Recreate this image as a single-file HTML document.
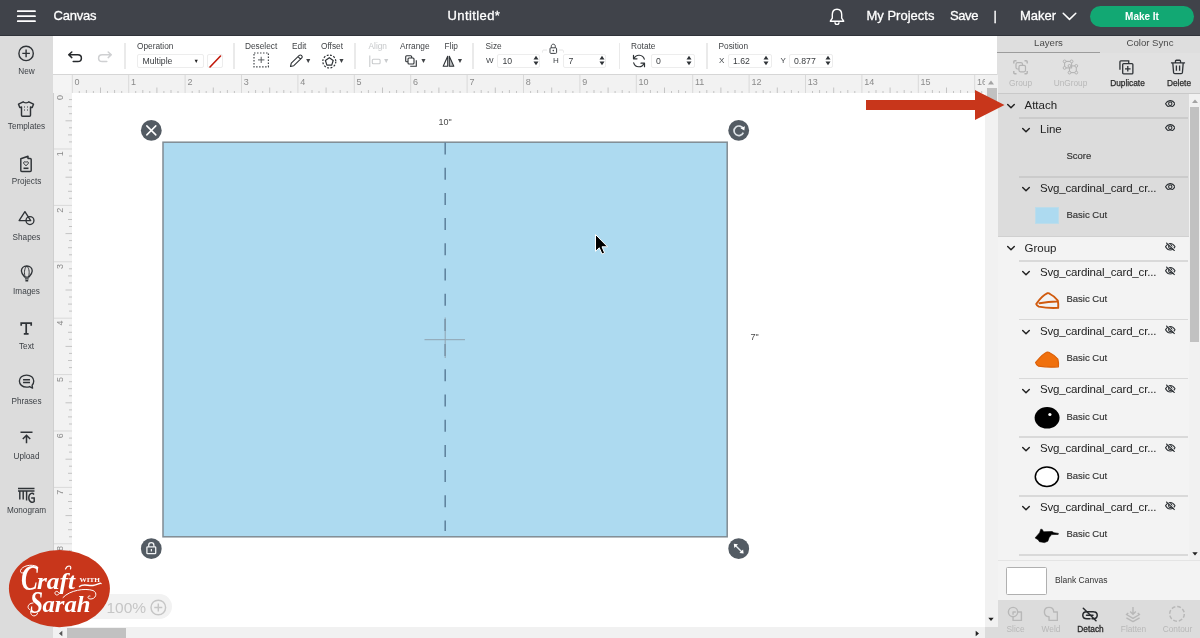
<!DOCTYPE html>
<html><head><meta charset="utf-8"><title>Canvas</title>
<style>
*{box-sizing:border-box;margin:0;padding:0}
html,body{width:1200px;height:638px;overflow:hidden;background:#fff;font-family:"Liberation Sans",sans-serif;color:#333}
.abs{position:absolute}
body>.abs{will-change:transform}
#hdr{will-change:transform;position:absolute;left:0;top:0;width:1200px;height:35.500px;background:#40434a;color:#fff;border-bottom:1.500px solid #30333a;z-index:5}
#hdr .t{position:absolute;top:7.5px;font-size:13px;line-height:16px;white-space:nowrap;color:#fff;-webkit-text-stroke:0.3px #fff}
#side{will-change:transform;position:absolute;left:0;top:35px;width:53px;height:603px;background:#dcdcdc}
#side .lb{position:absolute;left:0;width:53px;text-align:center;font-size:8.2px;color:#3b3f44;line-height:10px}
#side svg{position:absolute}
#tb{will-change:transform;position:absolute;left:53px;top:35px;width:944px;height:39px;background:#fff}
#tb .l{position:absolute;top:6px;font-size:8.3px;line-height:10px;color:#404346;white-space:nowrap}
#tb .sep{position:absolute;top:8px;width:1.500px;height:25.500px;background:#eaeaea}
#tb .inp{position:absolute;top:18.5px;height:14px;border:1px solid #ededed;border-radius:2px;font-size:8.7px;line-height:12px;padding-left:4.5px;color:#3a3d40;background:#fff}
#tb .sm{position:absolute;top:20.5px;font-size:8px;line-height:10px;color:#3f4347}
#tb svg{position:absolute}
#hr{will-change:transform;position:absolute;left:53px;top:74px;width:944px;height:19px;background:#f2f2f2;border-top:1.5px solid #d6d6d6}
#vr{will-change:transform;position:absolute;left:53px;top:93px;width:19px;height:534px;background:#f2f2f2;border-left:1.500px solid #cfcfcf}
#cv{will-change:transform;position:absolute;left:72px;top:93px;width:913px;height:534px;background:#fff;overflow:hidden}
#rp{will-change:transform;position:absolute;left:997px;top:35px;width:203px;height:603px;background:#f3f3f3}

#rp .tab{position:absolute;top:0;height:18px;font-size:9.6px;line-height:15.5px;color:#4a4a4a;text-align:center;background:#dedede}
#rp .al{position:absolute;font-size:8.3px;line-height:10px;white-space:nowrap;transform:translateX(-50%)}
#rp svg{position:absolute}
#rp .row{position:absolute;font-size:11.5px;line-height:14px;color:#222;white-space:nowrap}
#rp .svgn{letter-spacing:-0.17px}
#rp .sub{position:absolute;left:69.500px;font-size:9.500px;line-height:12px;color:#333;white-space:nowrap;-webkit-text-stroke:0.150px #333}
#rp .hl{position:absolute;height:1.5px;background:#cbcbcb}
#rp .hl2{position:absolute;height:1.5px;background:#d9d9d9}
</style></head><body>
<div id="hdr">
 <svg class="abs" style="left:16px;top:9px" width="21" height="14" viewBox="0 0 21 14"><path d="M1.800 2.200H19M1.800 7.200H19M1.800 12.200H19" stroke="#fff" stroke-width="1.800" stroke-linecap="round"/></svg>
 <span class="t" style="left:53.5px;letter-spacing:-0.2px">Canvas</span>
 <span class="t" style="left:447.5px;letter-spacing:0.4px">Untitled*</span>
 <span class="t" style="left:866.5px">My Projects</span>
 <span class="t" style="left:950px;letter-spacing:-0.4px">Save</span>
 <span class="t" style="left:993.5px">|</span>
 <span class="t" style="left:1020px">Maker</span>

 <svg class="abs" style="left:828px;top:7px" width="18" height="20" viewBox="0 0 18 20"><path d="M9 2.2C5.8 2.2 4.3 4.6 4.3 7.6V11.2L2.3 14.2H15.7L13.7 11.2V7.6C13.7 4.6 12.2 2.2 9 2.2Z" fill="none" stroke="#fff" stroke-width="1.4" stroke-linejoin="round"/><path d="M7 15.2C7 16.6 7.9 17.4 9 17.4S11 16.6 11 15.2" fill="none" stroke="#fff" stroke-width="1.4"/></svg>
 <svg class="abs" style="left:1062px;top:12px" width="15" height="9" viewBox="0 0 15 9"><path d="M1.2 1.2L7.5 7.4L13.8 1.2" fill="none" stroke="#fff" stroke-width="1.5" stroke-linecap="round" stroke-linejoin="round"/></svg>
 <div class="abs" style="left:1090px;top:6px;width:104px;height:21px;border-radius:11px;background:#12a873;color:#fff;font-size:10px;font-weight:bold;text-align:center;line-height:21px">Make It</div>
</div>
<div id="side">
 <svg style="left:16px;top:9px" width="20" height="20" viewBox="0 0 20 20"><circle cx="10.100" cy="9.400" r="7.200" fill="none" stroke="#2f3337" stroke-width="1.400"/><path d="M6.300 9.400H13.900M10.100 5.600V13.200" stroke="#2f3337" stroke-width="1.400"/></svg>
 <span class="lb" style="top:32px">New</span>
 <svg style="left:17px;top:65px" width="18" height="18" viewBox="0 0 18 18"><path d="M6.200 1.800C6.800 3.200 11.200 3.200 11.800 1.800L16.500 4.200L15.200 7.600L13.500 7V15.200C13.500 15.800 13.100 16.200 12.500 16.200H5.500C4.900 16.200 4.500 15.800 4.500 15.200V7L2.800 7.600L1.500 4.200Z" fill="none" stroke="#2f3337" stroke-width="1.450" stroke-linejoin="round"/><path d="M7.500 6.500V7.500M10.500 6.500V7.500M7.500 9.500V10.500M10.500 9.500V10.500" stroke="#2f3337" stroke-width="1"/></svg>
 <span class="lb" style="top:87px">Templates</span>
 <svg style="left:19px;top:120px" width="14" height="18" viewBox="0 0 14 18"><path d="M1.800 3.800L9 1.300V3.500H11.200C11.800 3.500 12.200 3.900 12.200 4.500V15.500C12.200 16.100 11.800 16.500 11.200 16.500H2.800C2.200 16.500 1.800 16.100 1.800 15.500Z" fill="none" stroke="#2f3337" stroke-width="1.450" stroke-linejoin="round"/><path d="M7 10.600C5.400 9.500 4.600 8.700 4.600 7.800C4.600 6.600 6.200 6.300 7 7.400C7.800 6.300 9.400 6.600 9.400 7.800C9.400 8.700 8.600 9.500 7 10.600Z" fill="none" stroke="#2f3337" stroke-width="1"/><path d="M4.500 13.300H9.500" stroke="#2f3337" stroke-width="1.600"/></svg>
 <span class="lb" style="top:142px">Projects</span>
 <svg style="left:17.800px;top:175.300px" width="17.500" height="16.600" viewBox="0 0 19 18"><path d="M7.500 1.800L13.800 11.500H1.200Z" fill="none" stroke="#2f3337" stroke-width="1.450" stroke-linejoin="round"/><circle cx="13" cy="11.500" r="4.300" fill="none" stroke="#2f3337" stroke-width="1.450"/></svg>
 <span class="lb" style="top:197.700px">Shapes</span>
 <svg style="left:19.500px;top:229.500px" width="14" height="17.800" viewBox="0 0 15 19"><path d="M7.300 1C3.800 1 1.500 3.500 1.500 6.500C1.500 9.300 3.800 11.300 5.300 13H9.300C10.800 11.300 13.100 9.300 13.100 6.500C13.100 3.500 10.800 1 7.300 1Z" fill="none" stroke="#2f3337" stroke-width="1.450"/><path d="M5.600 13C4.300 9 4.300 4 7.300 1C10.300 4 10.300 9 9 13" fill="none" stroke="#2f3337" stroke-width="1"/><path d="M5.300 14.800H9.300M5.800 16.800H8.800" stroke="#2f3337" stroke-width="1.450"/></svg>
 <span class="lb" style="top:251.500px">Images</span>
 <svg style="left:20px;top:286.800px" width="13" height="14" viewBox="0 0 13 14"><path d="M1.200 3.800V1.200H11.200V3.800M6.200 1.200V11.800M3.800 11.800H8.600" fill="none" stroke="#2f3337" stroke-width="1.700"/></svg>
 <span class="lb" style="top:307px">Text</span>
 <svg style="left:17.500px;top:339.200px" width="17.500" height="15.700" viewBox="0 0 19 17"><path d="M9.300 1.200C4.700 1.200 1.500 4 1.500 7.700C1.500 11.400 4.700 14.200 9.300 14.200C10.500 14.200 11.600 14 12.600 13.600L15.800 15.300L15.300 12.200C16.500 11 17.100 9.400 17.100 7.700C17.100 4 13.900 1.200 9.300 1.200Z" fill="none" stroke="#2f3337" stroke-width="1.450" stroke-linejoin="round"/><path d="M5.500 6.200H13M5.500 9.200H13" stroke="#2f3337" stroke-width="1.450"/></svg>
 <span class="lb" style="top:361.600px">Phrases</span>
 <svg style="left:20px;top:395.500px" width="13" height="14" viewBox="0 0 13 14"><path d="M0.500 1.300H12.500M6.500 12.300V4.500M2.800 8L6.500 4.300L10.200 8" fill="none" stroke="#2f3337" stroke-width="1.500"/></svg>
 <span class="lb" style="top:416.800px">Upload</span>
 <svg style="left:17px;top:452px" width="19" height="18" viewBox="0 0 19 18"><path d="M1 1.500H17.500M1 4H17.500M2.800 4V12.500M6.200 4V12.500M9.600 4V13.500" fill="none" stroke="#2f3337" stroke-width="1.450"/><path d="M17 7.500C15.500 5.500 11.800 6 11.800 10.800C11.800 15.500 15.800 16 17.200 14.500V11H14.200" fill="none" stroke="#2f3337" stroke-width="1.450"/></svg>
 <span class="lb" style="top:470.500px">Monogram</span>
</div>
<div id="tb">
 <svg style="left:14px;top:15px" width="16" height="13" viewBox="0 0 16 13"><path d="M4.800 2L1.700 4.800L4.800 7.600M2 4.800H10.800C13 4.800 14.400 6.200 14.400 8.200S13 11.500 10.800 11.500H6.200" fill="none" stroke="#26292c" stroke-width="1.500" stroke-linecap="round" stroke-linejoin="round"/></svg>
 <svg style="left:44px;top:15px" width="16" height="13" viewBox="0 0 16 13"><path d="M11.200 2L14.300 4.800L11.200 7.600M14 4.800H5.200C3 4.800 1.600 6.200 1.600 8.200S3 11.500 5.200 11.500H9.800" fill="none" stroke="#cfd0d2" stroke-width="1.500" stroke-linecap="round" stroke-linejoin="round"/></svg>
 <div class="sep" style="left:71px"></div>
 <span class="l" style="left:84px">Operation</span>
 <div class="inp" style="left:84px;width:67px">Multiple<span style="position:absolute;right:4px;top:0;font-size:5.5px;color:#222">&#9660;</span></div>
 <div class="inp" style="left:154px;width:16px;padding:0"><svg style="left:0;top:0" width="14" height="13" viewBox="0 0 14 13"><path d="M2 12L12.500 1" stroke="#c2190b" stroke-width="1.6" stroke-linecap="round"/></svg></div>
 <div class="sep" style="left:180px"></div>
 <span class="l" style="left:192px">Deselect</span>
 <svg style="left:200.300px;top:17.200px" width="17" height="17" viewBox="0 0 17 17"><rect x="1" y="1" width="14.400" height="13.800" fill="none" stroke="#44484c" stroke-width="1.200" stroke-dasharray="1.500 1.500"/><path d="M8.200 4.800V11M5 7.900H11.400" stroke="#5a5e62" stroke-width="1"/></svg>
 <span class="l" style="left:239px">Edit</span>
 <svg style="left:236px;top:19px" width="15" height="14" viewBox="0 0 15 14"><path d="M1.500 12.500L2.300 9.200L10.300 1.400C10.900 0.800 11.800 0.800 12.400 1.400L12.800 1.800C13.400 2.400 13.400 3.300 12.800 3.900L4.800 11.700Z M9 2.700L11.500 5.200" fill="none" stroke="#2f3337" stroke-width="1.1" stroke-linejoin="round"/></svg>
 <span class="l" style="left:251.800px;top:21px;font-size:7px">&#9660;</span>
 <span class="l" style="left:268px">Offset</span>
 <svg style="left:268px;top:18px" width="17" height="17" viewBox="0 0 17 17"><circle cx="8.300" cy="8.500" r="6.500" fill="none" stroke="#2f3337" stroke-width="1.200" stroke-dasharray="1.900 1.500"/><path d="M8.3 4.7L12.2 7.5L10.7 12.1L5.9 12.1L4.4 7.5Z" fill="none" stroke="#2f3337" stroke-width="1.200" stroke-linejoin="round"/></svg>
 <span class="l" style="left:285px;top:21px;font-size:7px">&#9660;</span>
 <div class="sep" style="left:301px"></div>
 <span class="l" style="left:315.500px;color:#c6c8ca">Align</span>
 <svg style="left:316px;top:19.500px" width="14" height="13" viewBox="0 0 14 13"><path d="M0.800 0.500V12" stroke="#c9cbcd" stroke-width="1.100"/><rect x="3.300" y="4.200" width="7.800" height="4.600" rx="1" fill="none" stroke="#c9cbcd" stroke-width="1.100"/></svg>
 <span class="l" style="left:329.800px;top:21px;font-size:7px;color:#c9cbcd">&#9660;</span>
 <span class="l" style="left:347px">Arrange</span>
 <svg style="left:352px;top:20px" width="13" height="13" viewBox="0 0 13 13"><rect x="0.700" y="0.700" width="6" height="6" rx="1" fill="#fff" stroke="#2f3337" stroke-width="1.100"/><rect x="3" y="3" width="6" height="6" rx="1" fill="#fff" stroke="#2f3337" stroke-width="1.100"/><path d="M11.300 5.200V11.300H5.200" fill="none" stroke="#2f3337" stroke-width="1.100"/></svg>
 <span class="l" style="left:367px;top:21px;font-size:7px">&#9660;</span>
 <span class="l" style="left:391.500px">Flip</span>
 <svg style="left:389px;top:20px" width="14" height="13" viewBox="0 0 14 13"><path d="M5.700 1.200V11.300H1.200L5.700 1.200Z" fill="none" stroke="#2f3337" stroke-width="1.100" stroke-linejoin="round"/><path d="M7.300 1.200V11.300H11.800L7.300 1.200Z" fill="#b9bbbd" stroke="#2f3337" stroke-width="1.100" stroke-linejoin="round"/></svg>
 <span class="l" style="left:403.500px;top:21px;font-size:7px">&#9660;</span>
 <div class="sep" style="left:419px"></div>
 <span class="l" style="left:432.500px">Size</span>
 <span class="sm" style="left:433px">W</span>
 <div class="inp" style="left:444px;width:43px">10</div>
 <span class="sm" style="left:500px">H</span>
 <div class="inp" style="left:510px;width:43px">7</div>
 <svg style="left:488px;top:8px" width="24" height="12" viewBox="0 0 24 12"><path d="M1.500 9.500V8.500C1.500 7.500 2 7 3 7H6M22.500 9.500V8.500C22.500 7.500 22 7 21 7H18" fill="none" stroke="#e4e4e4" stroke-width="1"/><rect x="9" y="4.800" width="6.600" height="5.600" rx="1" fill="#fff" stroke="#3f4347" stroke-width="1"/><path d="M10.300 4.800V3.300C10.300 1.900 11.200 1.200 12.300 1.200S14.300 1.900 14.300 3.300V4.800" fill="none" stroke="#3f4347" stroke-width="1"/><circle cx="12.300" cy="7.600" r="0.800" fill="#3f4347"/></svg>
 <div class="sep" style="left:565.500px"></div>
 <span class="l" style="left:578px">Rotate</span>
 <svg style="left:579px;top:19px" width="14" height="14" viewBox="0 0 14 14"><path d="M12.300 5.200A5.500 5.500 0 0 0 2 4.500M1.700 8.800A5.500 5.500 0 0 0 12 9.500" fill="none" stroke="#2f3337" stroke-width="1.200" stroke-linecap="round"/><path d="M1.500 1.300V4.800H5M12.500 12.700V9.200H9" fill="none" stroke="#2f3337" stroke-width="1.200" stroke-linecap="round" stroke-linejoin="round"/></svg>
 <div class="inp" style="left:597.500px;width:44px">0</div>
 <div class="sep" style="left:653px"></div>
 <span class="l" style="left:665.500px">Position</span>
 <span class="sm" style="left:666px">X</span>
 <div class="inp" style="left:674.500px;width:44.500px">1.62</div>
 <span class="sm" style="left:727.500px">Y</span>
 <div class="inp" style="left:735.500px;width:44px">0.877</div>
 <svg style="left:479.5px;top:20px" width="6" height="11" viewBox="0 0 6 11"><path d="M3 0.800L5.500 4.500H0.500ZM3 10.200L5.500 6.500H0.500Z" fill="#2f3337"/></svg>
 <svg style="left:545.5px;top:20px" width="6" height="11" viewBox="0 0 6 11"><path d="M3 0.800L5.500 4.500H0.500ZM3 10.200L5.500 6.500H0.500Z" fill="#2f3337"/></svg>
 <svg style="left:632.5px;top:20px" width="6" height="11" viewBox="0 0 6 11"><path d="M3 0.800L5.500 4.500H0.500ZM3 10.200L5.500 6.500H0.500Z" fill="#2f3337"/></svg>
 <svg style="left:710px;top:20px" width="6" height="11" viewBox="0 0 6 11"><path d="M3 0.800L5.500 4.500H0.500ZM3 10.200L5.500 6.500H0.500Z" fill="#2f3337"/></svg>
 <svg style="left:771.5px;top:20px" width="6" height="11" viewBox="0 0 6 11"><path d="M3 0.800L5.500 4.500H0.500ZM3 10.200L5.500 6.500H0.500Z" fill="#2f3337"/></svg>
</div>
<div id="hr"><svg class="abs" style="left:0;top:0" width="932" height="19" viewBox="0 0 932 19"><rect x="0" y="0" width="19" height="19" fill="#f4f4f4"/><path d="M19.3 0V19M75.7 0V19M132.1 0V19M188.5 0V19M244.9 0V19M301.3 0V19M357.7 0V19M414.1 0V19M470.5 0V19M526.9 0V19M583.3 0V19M639.7 0V19M696.1 0V19M752.5 0V19M808.9 0V19M865.3 0V19M921.7 0V19" stroke="#d9d9d9" stroke-width="1" fill="none"/><path d="M26.3 19V16.0M33.4 19V15.0M40.4 19V16.0M47.5 19V12.5M54.5 19V16.0M61.6 19V15.0M68.7 19V16.0M82.7 19V16.0M89.8 19V15.0M96.8 19V16.0M103.9 19V12.5M110.9 19V16.0M118.0 19V15.0M125.0 19V16.0M139.2 19V16.0M146.2 19V15.0M153.2 19V16.0M160.3 19V12.5M167.3 19V16.0M174.4 19V15.0M181.4 19V16.0M195.6 19V16.0M202.6 19V15.0M209.7 19V16.0M216.7 19V12.5M223.8 19V16.0M230.8 19V15.0M237.8 19V16.0M251.9 19V16.0M259.0 19V15.0M266.0 19V16.0M273.1 19V12.5M280.1 19V16.0M287.2 19V15.0M294.2 19V16.0M308.4 19V16.0M315.4 19V15.0M322.4 19V16.0M329.5 19V12.5M336.6 19V16.0M343.6 19V15.0M350.7 19V16.0M364.8 19V16.0M371.8 19V15.0M378.8 19V16.0M385.9 19V12.5M392.9 19V16.0M400.0 19V15.0M407.1 19V16.0M421.2 19V16.0M428.2 19V15.0M435.2 19V16.0M442.3 19V12.5M449.4 19V16.0M456.4 19V15.0M463.5 19V16.0M477.6 19V16.0M484.6 19V15.0M491.6 19V16.0M498.7 19V12.5M505.8 19V16.0M512.8 19V15.0M519.9 19V16.0M533.9 19V16.0M541.0 19V15.0M548.0 19V16.0M555.1 19V12.5M562.1 19V16.0M569.2 19V15.0M576.2 19V16.0M590.3 19V16.0M597.4 19V15.0M604.4 19V16.0M611.5 19V12.5M618.5 19V16.0M625.6 19V15.0M632.6 19V16.0M646.7 19V16.0M653.8 19V15.0M660.8 19V16.0M667.9 19V12.5M674.9 19V16.0M682.0 19V15.0M689.0 19V16.0M703.1 19V16.0M710.2 19V15.0M717.2 19V16.0M724.3 19V12.5M731.3 19V16.0M738.4 19V15.0M745.4 19V16.0M759.5 19V16.0M766.6 19V15.0M773.6 19V16.0M780.7 19V12.5M787.7 19V16.0M794.8 19V15.0M801.8 19V16.0M815.9 19V16.0M823.0 19V15.0M830.0 19V16.0M837.1 19V12.5M844.1 19V16.0M851.2 19V15.0M858.2 19V16.0M872.3 19V16.0M879.4 19V15.0M886.4 19V16.0M893.5 19V12.5M900.5 19V16.0M907.6 19V15.0M914.6 19V16.0M928.7 19V16.0" stroke="#c4c4c4" stroke-width="1" fill="none"/><g font-family="Liberation Sans, sans-serif" font-size="9" fill="#8a8a8a"><text x="21.6" y="9.5">0</text><text x="78.0" y="9.5">1</text><text x="134.4" y="9.5">2</text><text x="190.8" y="9.5">3</text><text x="247.2" y="9.5">4</text><text x="303.6" y="9.5">5</text><text x="360.0" y="9.5">6</text><text x="416.4" y="9.5">7</text><text x="472.8" y="9.5">8</text><text x="529.2" y="9.5">9</text><text x="585.6" y="9.5">10</text><text x="642.0" y="9.5">11</text><text x="698.4" y="9.5">12</text><text x="754.8" y="9.5">13</text><text x="811.2" y="9.5">14</text><text x="867.6" y="9.5">15</text><text x="924.0" y="9.5">16</text></g></svg></div>
<div id="vr"><svg class="abs" style="left:0;top:0" width="18" height="532" viewBox="0 0 18 532"><path d="M0 56.0H18M0 112.4H18M0 168.8H18M0 225.2H18M0 281.6H18M0 338.0H18M0 394.4H18M0 450.8H18M0 507.2H18" stroke="#d9d9d9" stroke-width="1" fill="none"/><path d="M18 6.6H15.0M18 13.7H14.0M18 20.7H15.0M18 27.8H11.5M18 34.8H15.0M18 41.9H14.0M18 48.9H15.0M18 63.0H15.0M18 70.1H14.0M18 77.1H15.0M18 84.2H11.5M18 91.2H15.0M18 98.3H14.0M18 105.3H15.0M18 119.4H15.0M18 126.5H14.0M18 133.5H15.0M18 140.6H11.5M18 147.6H15.0M18 154.7H14.0M18 161.8H15.0M18 175.8H15.0M18 182.9H14.0M18 189.9H15.0M18 197.0H11.5M18 204.0H15.0M18 211.1H14.0M18 218.1H15.0M18 232.2H15.0M18 239.3H14.0M18 246.3H15.0M18 253.4H11.5M18 260.4H15.0M18 267.5H14.0M18 274.6H15.0M18 288.7H15.0M18 295.7H14.0M18 302.8H15.0M18 309.8H11.5M18 316.9H15.0M18 323.9H14.0M18 331.0H15.0M18 345.1H15.0M18 352.1H14.0M18 359.1H15.0M18 366.2H11.5M18 373.2H15.0M18 380.3H14.0M18 387.4H15.0M18 401.4H15.0M18 408.5H14.0M18 415.5H15.0M18 422.6H11.5M18 429.6H15.0M18 436.7H14.0M18 443.8H15.0M18 457.8H15.0M18 464.9H14.0M18 471.9H15.0M18 479.0H11.5M18 486.0H15.0M18 493.1H14.0M18 500.1H15.0M18 514.2H15.0M18 521.3H14.0M18 528.3H15.0" stroke="#c4c4c4" stroke-width="1" fill="none"/><g font-family="Liberation Sans, sans-serif" font-size="9" fill="#8a8a8a"><text transform="translate(8.500 1.9) rotate(-90)" text-anchor="end">0</text><text transform="translate(8.500 58.3) rotate(-90)" text-anchor="end">1</text><text transform="translate(8.500 114.7) rotate(-90)" text-anchor="end">2</text><text transform="translate(8.500 171.1) rotate(-90)" text-anchor="end">3</text><text transform="translate(8.500 227.5) rotate(-90)" text-anchor="end">4</text><text transform="translate(8.500 283.9) rotate(-90)" text-anchor="end">5</text><text transform="translate(8.500 340.3) rotate(-90)" text-anchor="end">6</text><text transform="translate(8.500 396.7) rotate(-90)" text-anchor="end">7</text><text transform="translate(8.500 453.1) rotate(-90)" text-anchor="end">8</text><text transform="translate(8.500 509.5) rotate(-90)" text-anchor="end">9</text></g></svg></div>
<div id="cv">
<svg class="abs" style="left:0;top:0" width="913" height="533" viewBox="72 93 913 533">
 <rect x="163" y="142.200" width="564.200" height="394.600" fill="#addaf0" stroke="#808b92" stroke-width="1.500"/>
 <path d="M445.200 142.500V531" stroke="#5d7f9b" stroke-width="1.500" stroke-dasharray="12 13.200"/>
 <path d="M424.500 339.700H465M445.200 317.500V358" stroke="#8fa3b0" stroke-width="1" fill="none"/>
 <g font-family="Liberation Sans, sans-serif" font-size="9" fill="#4a4a4a"><text x="438.500" y="125">10"</text><text x="750.500" y="340">7"</text></g>
 <g fill="#535b63"><circle cx="151.300" cy="130.400" r="10.400"/><circle cx="738.700" cy="130.400" r="10.400"/><circle cx="151.300" cy="548.700" r="10.400"/><circle cx="738.700" cy="548.700" r="10.400"/></g>
 <path d="M146.800 125.900L155.800 134.900M155.800 125.900L146.800 134.900" stroke="#fff" stroke-width="1.500" stroke-linecap="round"/>
 <path d="M743.200 128.800A4.800 4.800 0 1 0 743.300 132.600" fill="none" stroke="#dde2e6" stroke-width="1.700"/><path d="M744.900 126.300L744.300 130.600L740.500 128.300Z" fill="#fff"/>
 <rect x="146.900" y="546.800" width="8.800" height="6.900" rx="0.800" fill="none" stroke="#f2f4f5" stroke-width="1.300"/><path d="M148.700 546.800V545.300C148.700 543.500 149.900 542.700 151.300 542.700S153.900 543.500 153.900 545.300V546.800" fill="none" stroke="#f2f4f5" stroke-width="1.300"/><rect x="150.800" y="549" width="1.100" height="2.400" fill="#fff"/>
 <path d="M735.200 545.200L742.200 552.200" stroke="#e8edf0" stroke-width="1.450"/><path d="M733.800 543.800L738 544.300L734.300 548ZM743.600 553.600L739.400 553.100L743.100 549.400Z" fill="#fff"/>
 <path d="M595.500 234.500V251.300L599.300 247.800L602 254L604.600 252.900L602 246.800H607.600Z" fill="#000" stroke="#fff" stroke-width="1" stroke-linejoin="round"/>
 <rect x="60" y="594" width="112" height="25" rx="12.500" fill="#f2f2f2"/>
 <text x="106.500" y="613" font-family="Liberation Sans, sans-serif" font-size="15.500" fill="#c6c6c6">100%</text>
 <circle cx="158.300" cy="607.500" r="7.300" fill="none" stroke="#c6c6c6" stroke-width="1.450"/><path d="M154.300 607.500H162.300M158.300 603.500V611.500" stroke="#c6c6c6" stroke-width="1.450"/>
</svg>
</div>
<div id="rp">
 <div class="tab" style="left:0;width:103px">Layers</div>
 <div class="tab" style="left:103px;width:100px">Color Sync</div>
 <div class="abs" style="left:0;top:17px;width:103px;height:1px;background:#9c9c9c"></div>
 <div class="abs" style="left:0;top:18px;width:203px;height:41px;background:#e1e1e1;border-bottom:1px solid #c9c9c9"></div>
 <svg style="left:15px;top:24px" width="17" height="17" viewBox="0 0 17 17"><path d="M1.800 4.500V2.800C1.800 2.200 2.200 1.800 2.800 1.800H4.500M12.500 1.800H14.200C14.800 1.800 15.200 2.200 15.200 2.800V4.500M15.200 12V13.700C15.200 14.300 14.800 14.700 14.200 14.700H12.500M4.500 14.700H2.800C2.200 14.700 1.800 14.300 1.800 13.700V12" fill="none" stroke="#b4b4b4" stroke-width="1.450"/><rect x="4" y="3.700" width="6.500" height="6.300" rx="1.500" fill="none" stroke="#b4b4b4" stroke-width="1.200"/><rect x="7" y="6.300" width="6.500" height="6.500" rx="1.500" fill="#e1e1e1" stroke="#b4b4b4" stroke-width="1.200"/></svg>
 <span class="al" style="left:23.500px;top:43px;color:#b8b8b8">Group</span>
 <svg style="left:65px;top:24px" width="17" height="17" viewBox="0 0 17 17"><rect x="2.600" y="2.400" width="7" height="6.500" fill="none" stroke="#b4b4b4" stroke-width="1.100"/><rect x="7.500" y="6.900" width="6.800" height="6.700" fill="none" stroke="#b4b4b4" stroke-width="1.100"/><g fill="#e1e1e1" stroke="#b4b4b4" stroke-width="1"><circle cx="2.600" cy="2.400" r="1.400"/><circle cx="9.600" cy="2.400" r="1.400"/><circle cx="2.600" cy="8.900" r="1.400"/><circle cx="7.500" cy="6.900" r="1.400"/><circle cx="14.300" cy="6.900" r="1.400"/><circle cx="7.500" cy="13.600" r="1.400"/><circle cx="14.300" cy="13.600" r="1.400"/></g></svg>
 <span class="al" style="left:73.500px;top:43px;color:#b8b8b8">UnGroup</span>
 <svg style="left:122.300px;top:25.200px" width="14.800" height="14.800" viewBox="0 0 16 16"><path d="M1 10.500V2C1 1.400 1.400 1 2 1H10.500V3.500" fill="none" stroke="#2f3337" stroke-width="1.400"/><rect x="4" y="4" width="11" height="11" rx="1" fill="none" stroke="#2f3337" stroke-width="1.400"/><path d="M9.500 6.500V12.500M6.500 9.500H12.500" stroke="#2f3337" stroke-width="1.400"/></svg>
 <span class="al" style="left:130.500px;top:43px;color:#2a2a2a;-webkit-text-stroke:0.25px #2a2a2a">Duplicate</span>
 <svg style="left:172.800px;top:24.300px" width="16" height="16" viewBox="0 0 17 17"><path d="M1 4.200H16M5.800 4V2.300C5.800 1.700 6.200 1.300 6.800 1.300H10.200C10.800 1.300 11.200 1.700 11.200 2.300V4M3 4.500L3.800 14.300C3.850 15 4.400 15.500 5.100 15.500H11.900C12.600 15.500 13.150 15 13.200 14.300L14 4.500" fill="none" stroke="#2f3337" stroke-width="1.400" stroke-linejoin="round"/><path d="M6.800 7V12.500M10.200 7V12.500" stroke="#2f3337" stroke-width="1.400"/></svg>
 <span class="al" style="left:182px;top:43px;color:#2a2a2a;-webkit-text-stroke:0.25px #2a2a2a">Delete</span>

 <div class="abs" style="left:0;top:59px;width:191.500px;height:142px;background:#dcdcdc"></div>
 <svg style="left:9.1px;top:67.8px" width="10" height="7" viewBox="0 0 10 7"><path d="M1.700 1.500L5 4.800L8.300 1.500" fill="none" stroke="#222" stroke-width="1.450" stroke-linecap="round" stroke-linejoin="round"/></svg><span class="row" style="left:27.500px;top:62.500px">Attach</span><svg style="left:167.500px;top:64.5px" width="10.500" height="7.600" viewBox="0 0 12 8" preserveAspectRatio="none"><path d="M0.600 4C2 1.600 3.800 0.600 6 0.600S10 1.600 11.400 4C10 6.400 8.200 7.400 6 7.400S2 6.400 0.600 4Z" fill="none" stroke="#2f3337" stroke-width="1.250"/><circle cx="6" cy="4" r="1.900" fill="none" stroke="#2f3337" stroke-width="1.250"/></svg>
 <div class="hl" style="left:22px;top:82px;width:169px"></div>
 <svg style="left:24.1px;top:91.8px" width="10" height="7" viewBox="0 0 10 7"><path d="M1.700 1.500L5 4.800L8.300 1.500" fill="none" stroke="#222" stroke-width="1.450" stroke-linecap="round" stroke-linejoin="round"/></svg><span class="row" style="left:43px;top:87px">Line</span><svg style="left:167.500px;top:88.5px" width="10.500" height="7.600" viewBox="0 0 12 8" preserveAspectRatio="none"><path d="M0.600 4C2 1.600 3.800 0.600 6 0.600S10 1.600 11.400 4C10 6.400 8.200 7.400 6 7.400S2 6.400 0.600 4Z" fill="none" stroke="#2f3337" stroke-width="1.250"/><circle cx="6" cy="4" r="1.900" fill="none" stroke="#2f3337" stroke-width="1.250"/></svg>
 <span class="sub" style="top:115px">Score</span>
 <div class="hl" style="left:22px;top:141px;width:169px"></div>
 <svg style="left:24.1px;top:150.8px" width="10" height="7" viewBox="0 0 10 7"><path d="M1.700 1.500L5 4.800L8.300 1.500" fill="none" stroke="#222" stroke-width="1.450" stroke-linecap="round" stroke-linejoin="round"/></svg><span class="row svgn" style="left:43px;top:145.500px">Svg_cardinal_card_cr...</span><svg style="left:167.500px;top:147.5px" width="10.500" height="7.600" viewBox="0 0 12 8" preserveAspectRatio="none"><path d="M0.600 4C2 1.600 3.800 0.600 6 0.600S10 1.600 11.400 4C10 6.400 8.200 7.400 6 7.400S2 6.400 0.600 4Z" fill="none" stroke="#2f3337" stroke-width="1.250"/><circle cx="6" cy="4" r="1.900" fill="none" stroke="#2f3337" stroke-width="1.250"/></svg>
 <div class="abs" style="left:38px;top:172.300px;width:24px;height:17px;background:#addaf0;border:1px solid #bcdcea"></div>
 <span class="sub" style="top:174px">Basic Cut</span>
 <div class="hl" style="left:0;top:200.500px;width:191.500px;background:#d0d0d0"></div>

 <svg style="left:9.1px;top:210.3px" width="10" height="7" viewBox="0 0 10 7"><path d="M1.700 1.500L5 4.800L8.300 1.500" fill="none" stroke="#222" stroke-width="1.450" stroke-linecap="round" stroke-linejoin="round"/></svg><span class="row" style="left:27.500px;top:205.500px">Group</span><svg style="left:167.500px;top:206.5px" width="11.400" height="9.500" viewBox="0 0 13 10" preserveAspectRatio="none"><path d="M0.600 5C2 2.600 3.800 1.600 6 1.600S10 2.600 11.400 5C10 7.400 8.200 8.400 6 8.400S2 7.400 0.600 5Z" fill="none" stroke="#2f3337" stroke-width="1.250"/><circle cx="6" cy="5" r="1.900" fill="none" stroke="#2f3337" stroke-width="1.250"/><path d="M1.500 0.800L11 9.200" stroke="#2f3337" stroke-width="1.400"/><path d="M2.300 0.300L11.800 8.700" stroke="#f3f3f3" stroke-width="0.800"/></svg>
 <div class="hl2" style="left:22px;top:225.0px;width:169px"></div>
 <svg style="left:24.1px;top:235.1px" width="10" height="7" viewBox="0 0 10 7"><path d="M1.700 1.500L5 4.800L8.300 1.500" fill="none" stroke="#222" stroke-width="1.450" stroke-linecap="round" stroke-linejoin="round"/></svg><span class="row svgn" style="left:43px;top:229.8px">Svg_cardinal_card_cr...</span><svg style="left:167.500px;top:231.3px" width="11.400" height="9.500" viewBox="0 0 13 10" preserveAspectRatio="none"><path d="M0.600 5C2 2.600 3.800 1.600 6 1.600S10 2.600 11.400 5C10 7.400 8.200 8.400 6 8.400S2 7.400 0.600 5Z" fill="none" stroke="#2f3337" stroke-width="1.250"/><circle cx="6" cy="5" r="1.900" fill="none" stroke="#2f3337" stroke-width="1.250"/><path d="M1.500 0.800L11 9.200" stroke="#2f3337" stroke-width="1.400"/><path d="M2.300 0.300L11.800 8.700" stroke="#f3f3f3" stroke-width="0.800"/></svg>
 <svg style="left:37px;top:255.500px" width="27" height="20" viewBox="0 0 27 20"><path d="M2.200 13C5 9 9.500 4 13.500 2.200C14.500 2 15.500 2.500 16 3C19 4.500 22 7 23.800 9.500C24.300 12 24.400 14.500 24.200 16.800C17 17.200 10 16.600 4.800 15.600C3.500 15 2.500 14 2.200 13ZM5.500 12.300C11 11.200 17 10.500 23 10.500" fill="none" stroke="#d05a0e" stroke-width="1.900" stroke-linejoin="round" stroke-linecap="round"/></svg>
 <span class="sub" style="top:258.3px">Basic Cut</span>
 <div class="hl2" style="left:22px;top:283.7px;width:169px"></div>
 <svg style="left:24.1px;top:293.9px" width="10" height="7" viewBox="0 0 10 7"><path d="M1.700 1.500L5 4.800L8.300 1.500" fill="none" stroke="#222" stroke-width="1.450" stroke-linecap="round" stroke-linejoin="round"/></svg><span class="row svgn" style="left:43px;top:288.6px">Svg_cardinal_card_cr...</span><svg style="left:167.500px;top:290.1px" width="11.400" height="9.500" viewBox="0 0 13 10" preserveAspectRatio="none"><path d="M0.600 5C2 2.600 3.800 1.600 6 1.600S10 2.600 11.400 5C10 7.400 8.200 8.400 6 8.400S2 7.400 0.600 5Z" fill="none" stroke="#2f3337" stroke-width="1.250"/><circle cx="6" cy="5" r="1.900" fill="none" stroke="#2f3337" stroke-width="1.250"/><path d="M1.500 0.800L11 9.200" stroke="#2f3337" stroke-width="1.400"/><path d="M2.300 0.300L11.800 8.700" stroke="#f3f3f3" stroke-width="0.800"/></svg>
 <svg style="left:37px;top:314.500px" width="27" height="20" viewBox="0 0 27 20"><path d="M1.600 12.500C5 8.500 9 3.500 13.100 2C14.500 2 15.500 2.500 16 3C19 4.500 22 6.500 23.800 9C24.500 11.500 24.600 14.500 24.400 16.800C17 17.500 10 17 4.600 16.200C3 15.500 2 14 1.600 12.500Z" fill="#f0700d" stroke="#dc610a" stroke-width="1.200" stroke-linejoin="round"/></svg>
 <span class="sub" style="top:317.1px">Basic Cut</span>
 <div class="hl2" style="left:22px;top:342.5px;width:169px"></div>
 <svg style="left:24.1px;top:352.6px" width="10" height="7" viewBox="0 0 10 7"><path d="M1.700 1.500L5 4.800L8.300 1.500" fill="none" stroke="#222" stroke-width="1.450" stroke-linecap="round" stroke-linejoin="round"/></svg><span class="row svgn" style="left:43px;top:347.3px">Svg_cardinal_card_cr...</span><svg style="left:167.500px;top:348.8px" width="11.400" height="9.500" viewBox="0 0 13 10" preserveAspectRatio="none"><path d="M0.600 5C2 2.600 3.800 1.600 6 1.600S10 2.600 11.400 5C10 7.400 8.200 8.400 6 8.400S2 7.400 0.600 5Z" fill="none" stroke="#2f3337" stroke-width="1.250"/><circle cx="6" cy="5" r="1.900" fill="none" stroke="#2f3337" stroke-width="1.250"/><path d="M1.500 0.800L11 9.200" stroke="#2f3337" stroke-width="1.400"/><path d="M2.300 0.300L11.800 8.700" stroke="#f3f3f3" stroke-width="0.800"/></svg>
 <svg style="left:37px;top:371px" width="27" height="24" viewBox="0 0 27 24"><ellipse cx="13.100" cy="11.800" rx="12.500" ry="10.800" fill="#000"/><circle cx="15.900" cy="8.500" r="1.600" fill="#fff"/></svg>
 <span class="sub" style="top:375.8px">Basic Cut</span>
 <div class="hl2" style="left:22px;top:401.3px;width:169px"></div>
 <svg style="left:24.1px;top:411.4px" width="10" height="7" viewBox="0 0 10 7"><path d="M1.700 1.500L5 4.800L8.300 1.500" fill="none" stroke="#222" stroke-width="1.450" stroke-linecap="round" stroke-linejoin="round"/></svg><span class="row svgn" style="left:43px;top:406.1px">Svg_cardinal_card_cr...</span><svg style="left:167.500px;top:407.6px" width="11.400" height="9.500" viewBox="0 0 13 10" preserveAspectRatio="none"><path d="M0.600 5C2 2.600 3.800 1.600 6 1.600S10 2.600 11.400 5C10 7.400 8.200 8.400 6 8.400S2 7.400 0.600 5Z" fill="none" stroke="#2f3337" stroke-width="1.250"/><circle cx="6" cy="5" r="1.900" fill="none" stroke="#2f3337" stroke-width="1.250"/><path d="M1.500 0.800L11 9.200" stroke="#2f3337" stroke-width="1.400"/><path d="M2.300 0.300L11.800 8.700" stroke="#f3f3f3" stroke-width="0.800"/></svg>
 <svg style="left:37px;top:430px" width="27" height="24" viewBox="0 0 27 24"><ellipse cx="12.900" cy="11.700" rx="11.600" ry="9.800" fill="#fff" stroke="#000" stroke-width="1.500"/></svg>
 <span class="sub" style="top:434.6px">Basic Cut</span>
 <div class="hl2" style="left:22px;top:460.0px;width:169px"></div>
 <svg style="left:24.1px;top:470.1px" width="10" height="7" viewBox="0 0 10 7"><path d="M1.700 1.500L5 4.800L8.300 1.500" fill="none" stroke="#222" stroke-width="1.450" stroke-linecap="round" stroke-linejoin="round"/></svg><span class="row svgn" style="left:43px;top:464.8px">Svg_cardinal_card_cr...</span><svg style="left:167.500px;top:466.3px" width="11.400" height="9.500" viewBox="0 0 13 10" preserveAspectRatio="none"><path d="M0.600 5C2 2.600 3.800 1.600 6 1.600S10 2.600 11.400 5C10 7.400 8.200 8.400 6 8.400S2 7.400 0.600 5Z" fill="none" stroke="#2f3337" stroke-width="1.250"/><circle cx="6" cy="5" r="1.900" fill="none" stroke="#2f3337" stroke-width="1.250"/><path d="M1.500 0.800L11 9.200" stroke="#2f3337" stroke-width="1.400"/><path d="M2.300 0.300L11.800 8.700" stroke="#f3f3f3" stroke-width="0.800"/></svg>
 <svg style="left:37px;top:492.500px" width="27" height="17" viewBox="0 0 27 17"><path d="M1.100 9.900L5.600 4.700L6.800 1.200L8.200 1.400L9.600 3.800L18.100 3.500L19.900 4.700L24.400 5.400L24.200 6.400L17.600 6.600L15.200 9.400L13.800 13.200L10.500 14.600L5.400 13.700L4.200 11.800Z" fill="#000" stroke="#000" stroke-width="0.600" stroke-linejoin="round"/></svg>
 <span class="sub" style="top:493.3px">Basic Cut</span>
 <div class="hl2" style="left:22px;top:519.0px;width:169px"></div>
 <div class="abs" style="left:191.500px;top:59px;width:11.500px;height:467px;background:#f1f1f1"></div>
 <div class="abs" style="left:192.500px;top:72px;width:9.500px;height:235px;background:#c1c1c1"></div>
 <svg style="left:191.500px;top:59px" width="12" height="467" viewBox="0 0 12 467"><path d="M3 9L6 5.500L9 9Z" fill="#a3a3a3"/><path d="M3.300 458.300L6 461.500L8.700 458.300Z" fill="#222"/></svg>
 <div class="abs" style="left:0;top:524.500px;width:203px;height:1px;background:#e4e4e4"></div>
 <div class="abs" style="left:8.500px;top:532px;width:41.500px;height:27.500px;background:#fff;border:1.200px solid #b0b0b0;border-radius:1.500px"></div>
 <span class="abs" style="left:58px;top:539.500px;font-size:8.500px;line-height:10px;color:#333">Blank Canvas</span>
 <div class="abs" style="left:0;top:564.500px;width:203px;height:38.500px;background:#dcdcdc"></div>

 <svg style="left:10px;top:571.200px" width="15.800" height="15.800" viewBox="0 0 17 17"><circle cx="6.500" cy="6.500" r="5" fill="none" stroke="#b8b8b8" stroke-width="1.500"/><path d="M6.500 9.500V6.500H9.500M11.500 6.500H15.500V15.500H6.500V11.500" fill="none" stroke="#b8b8b8" stroke-width="1.500" stroke-linejoin="round"/></svg>
 <span class="al" style="left:18.500px;top:588.500px;color:#b8b8b8">Slice</span>
 <svg style="left:45.700px;top:571.200px" width="15.800" height="15.800" viewBox="0 0 17 17"><path d="M6.500 1.500C9.500 1.500 11.500 3.500 11.500 6.500H15.500V15.500H6.500V11.500C3.500 11.500 1.500 9.500 1.500 6.500S3.500 1.500 6.500 1.500Z" fill="none" stroke="#b8b8b8" stroke-width="1.500" stroke-linejoin="round"/></svg>
 <span class="al" style="left:54px;top:588.500px;color:#b8b8b8">Weld</span>
 <svg style="left:84px;top:572px" width="18" height="15" viewBox="0 0 18 15"><path d="M12.500 4.800H5.800C3.300 4.800 1.800 6.300 1.800 8.300S3.300 11.800 5.800 11.800H9M7.500 4.800H12.200C14.700 4.800 16.200 6.300 16.200 8.300S14.700 11.800 12.200 11.800H11" fill="none" stroke="#26292c" stroke-width="1.500" stroke-linecap="round"/><path d="M5.500 8.300H12" stroke="#26292c" stroke-width="1.500" stroke-linecap="round"/><path d="M2.300 1.300L15 13.700" stroke="#26292c" stroke-width="1.500" stroke-linecap="round"/></svg>
 <span class="al" style="left:93.500px;top:588.500px;color:#2a2a2a;-webkit-text-stroke:0.3px #2a2a2a">Detach</span>
 <svg style="left:128px;top:570.500px" width="16" height="17" viewBox="0 0 17 18"><path d="M8.500 1V8.500M5.500 5.800L8.500 8.800L11.500 5.800" fill="none" stroke="#b8b8b8" stroke-width="1.500"/><path d="M3.500 7.500L1.500 9L8.500 13L15.500 9L13.500 7.500M1.500 12.500L8.500 16.500L15.500 12.500" fill="none" stroke="#b8b8b8" stroke-width="1.500" stroke-linejoin="round"/></svg>
 <span class="al" style="left:136.500px;top:588.500px;color:#b8b8b8">Flatten</span>
 <svg style="left:171px;top:569.500px" width="18" height="18" viewBox="0 0 18 18"><circle cx="9" cy="8.900" r="7.300" fill="none" stroke="#b8b8b8" stroke-width="1.500" stroke-dasharray="3.800 1.930"/></svg>
 <span class="al" style="left:180.500px;top:588.500px;color:#b8b8b8">Contour</span>
</div>

<div class="abs" style="left:985px;top:75px;width:12.500px;height:552px;background:#f1f1f1"></div>
<div class="abs" style="left:986.500px;top:88px;width:9.500px;height:16px;background:#c1c1c1"></div>
<svg class="abs" style="left:985px;top:75px" width="13" height="563" viewBox="0 0 13 563"><path d="M3 9.500L6 5.500L9 9.500Z" fill="#a3a3a3"/><path d="M3.300 542.800L6 546L8.700 542.800Z" fill="#222"/></svg>
<div class="abs" style="left:53px;top:627px;width:932px;height:11px;background:#f1f1f1"></div>
<div class="abs" style="left:66.500px;top:627.500px;width:59px;height:10.500px;background:#c1c1c1"></div>
<svg class="abs" style="left:53px;top:626.700px" width="945" height="12" viewBox="0 0 945 12"><path d="M9.300 3.800L6 6.500L9.300 9.200Z" fill="#555"/><path d="M922.700 3.800L926 6.500L922.700 9.200Z" fill="#222"/><rect x="932" y="0" width="13" height="12" fill="#dcdcdc"/></svg>
<svg class="abs" style="left:860px;top:85px" width="150" height="40" viewBox="860 85 150 40"><path d="M866 100H975V90L1004.500 105L975 120V110H866Z" fill="#c8361b"/></svg>
<svg class="abs" style="left:5px;top:546px" width="110" height="86" viewBox="5 546 110 86">
 <ellipse cx="59.400" cy="588.600" rx="50.500" ry="38.600" fill="#c8361b"/>
 <g fill="#fff" font-family="Liberation Serif, serif" font-style="italic" font-weight="bold">
  <text x="21" y="589.500" font-size="35" textLength="17" lengthAdjust="spacingAndGlyphs">C</text>
  <text x="37" y="589" font-size="24" textLength="38" lengthAdjust="spacingAndGlyphs">raft</text>
  <text x="30" y="612.500" font-size="32" textLength="13" lengthAdjust="spacingAndGlyphs">S</text>
  <text x="42.500" y="612.300" font-size="24" textLength="48" lengthAdjust="spacingAndGlyphs">arah</text>
  <text x="79.500" y="581.800" font-size="6" font-style="normal" textLength="20.500" lengthAdjust="spacingAndGlyphs">WITH</text>
 </g>
 <g fill="none" stroke="#fff" stroke-linecap="round">
  <path d="M79.500 586.500C83 583.500 88 586 93 585.500S99.500 582.500 101 583.500" stroke-width="1.450"/>
  <path d="M37 566.500C31 563.500 22 566 20.500 570.500C20 573 23 574 24 572" stroke-width="1"/>
  <path d="M65.500 569C67 565 72 565 70.500 569" stroke-width="1.200"/>
  <path d="M62 589C60 595 56 596.500 55 593.500C54.500 591 58 590.500 58.500 592.500" stroke-width="1"/>
  <path d="M63 597.500C70 590 85 588 93 590.500C98 592.500 96 599.500 90 599C87 598.500 87.500 595.500 90 596" stroke-width="1"/>
  <path d="M33 603C28 603 26.500 608 29.500 609.500M31 611C29 616 36 618 37.500 613.500" stroke-width="1"/>
 </g>
</svg>
</body></html>
